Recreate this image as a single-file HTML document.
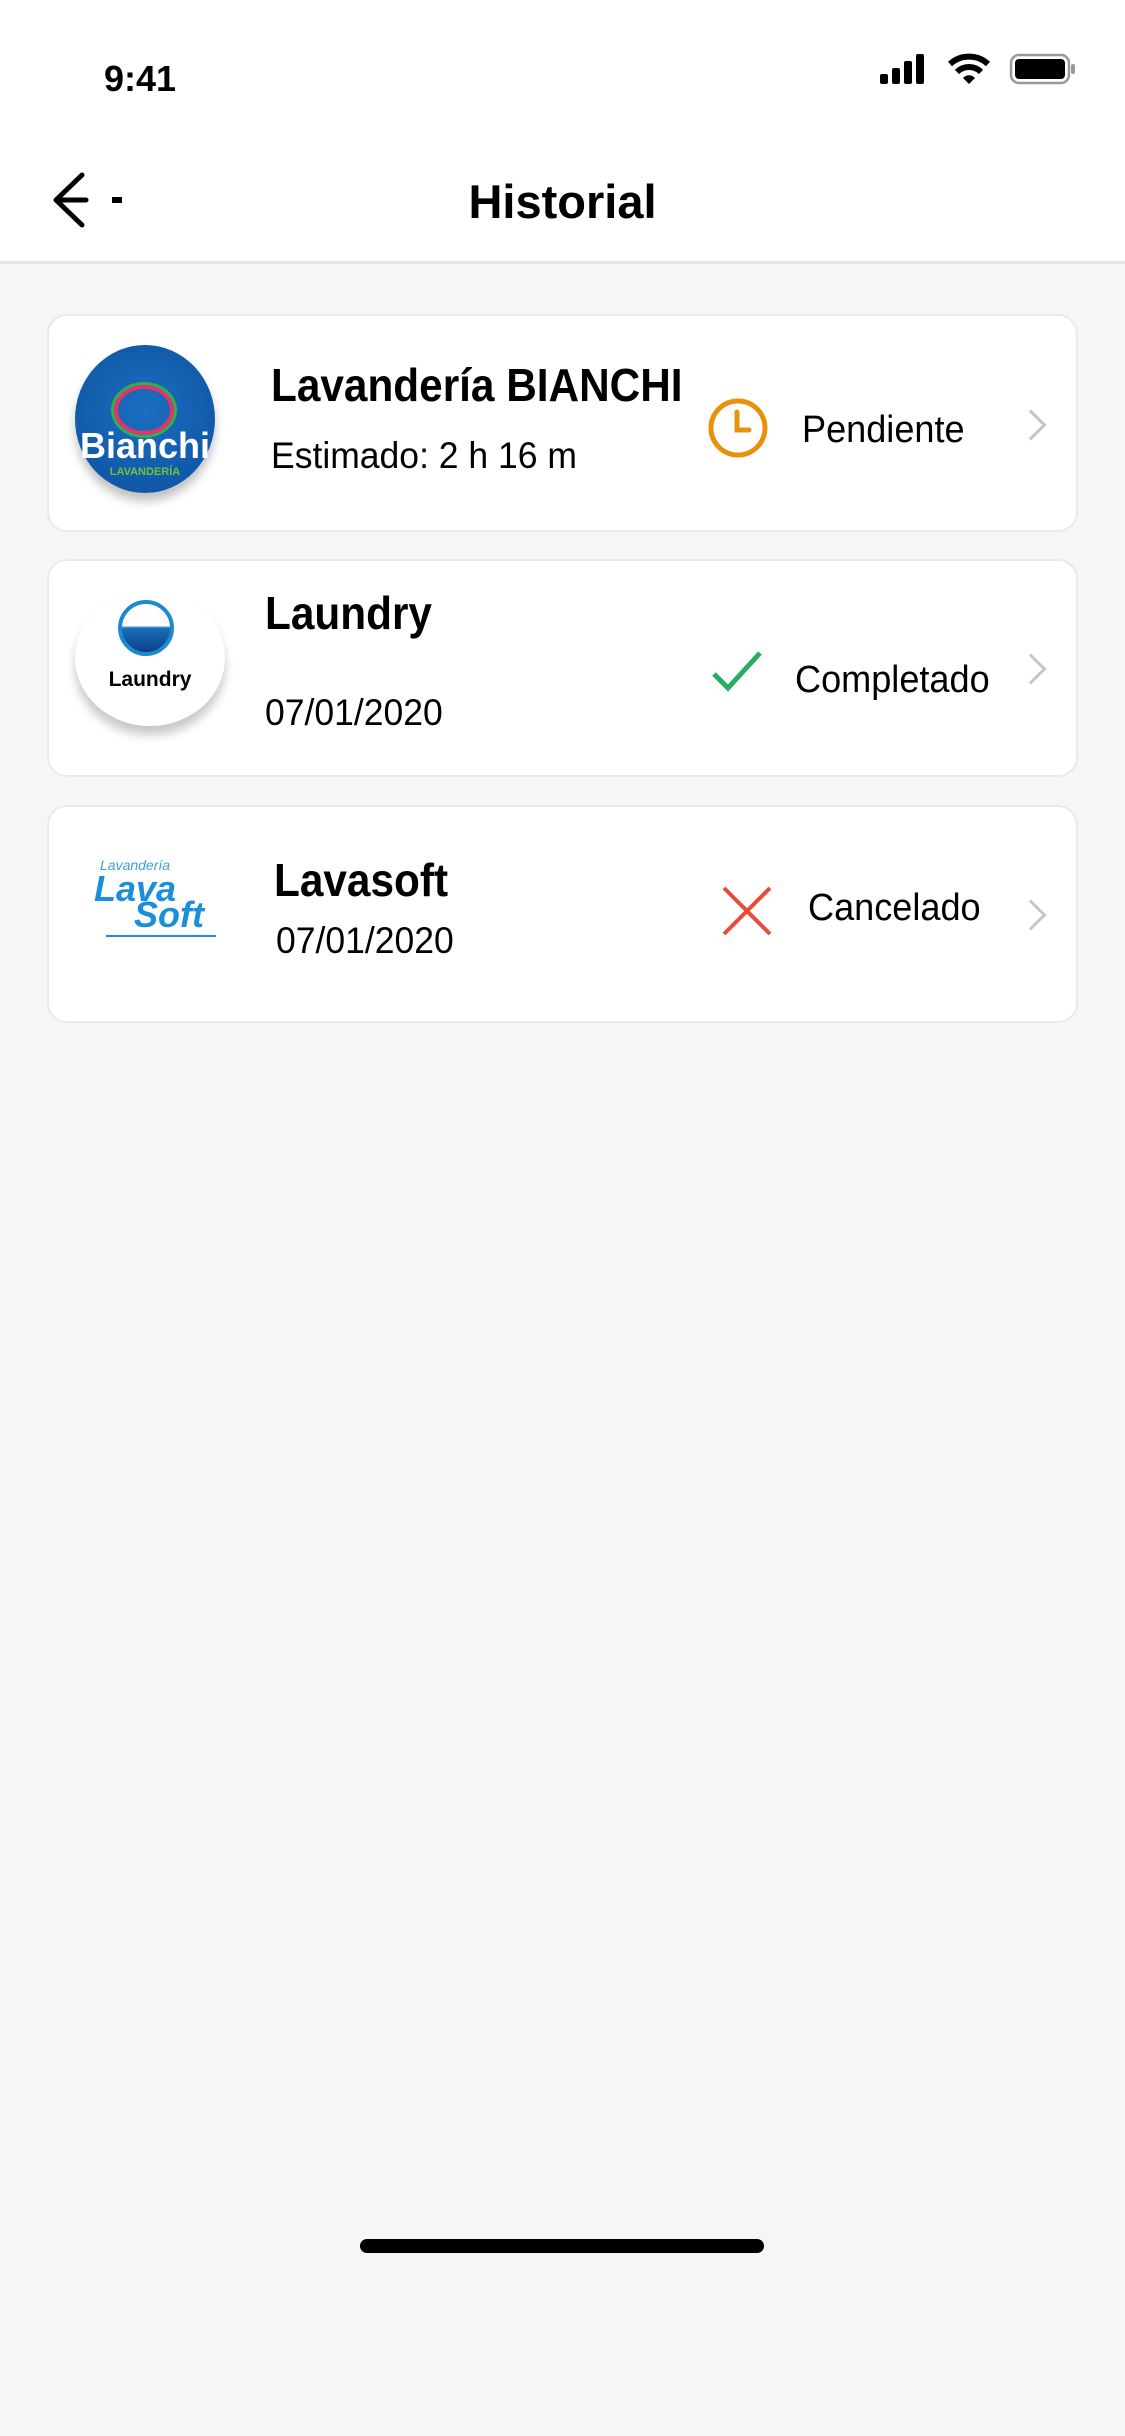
<!DOCTYPE html>
<html><head><meta charset="utf-8"><style>
*{margin:0;padding:0;box-sizing:border-box}
body{width:1125px;height:2436px;background:#f5f6f8;font-family:"Liberation Sans Narrow","Liberation Sans",sans-serif;color:#000;position:relative;overflow:hidden}
.hdr{position:absolute;left:0;top:0;width:1125px;height:264px;background:#fff;border-bottom:3px solid #e4e5e8}
.abs{position:absolute;white-space:nowrap}
.card{position:absolute;left:47px;width:1031px;height:218px;background:#fff;border:2px solid #e8eaee;border-radius:20px}
.t{font-size:46px;font-weight:bold;line-height:1;transform:scaleX(.92);transform-origin:left}
.s{font-size:37px;line-height:1;transform:scaleX(.96);transform-origin:left}
.st{font-size:38px;line-height:1;transform:scaleX(.95);transform-origin:left}
.chev{position:absolute;width:22px;height:22px;border-right:3px solid #c6c6c8;border-top:3px solid #c6c6c8;transform:rotate(45deg)}
</style></head><body>
<div class="hdr"></div>
<div class="abs" style="left:104px;top:58px;font-size:36px;font-weight:bold">9:41</div>
<svg class="abs" style="left:878px;top:52px" width="200" height="34">
<rect x="2" y="22" width="8" height="10" rx="2"/><rect x="14" y="16" width="8" height="16" rx="2"/><rect x="26" y="9" width="8" height="23" rx="2"/><rect x="38" y="2" width="8" height="30" rx="2"/>
<path d="M72 12a28 28 0 0 1 38 0" stroke="#000" stroke-width="6" fill="none"/><path d="M79 20a17 17 0 0 1 24 0" stroke="#000" stroke-width="6" fill="none"/><path d="M85 26l6 6 6-6a8 8 0 0 0-12 0z"/>
<rect x="133" y="3" width="58" height="28" rx="8" fill="none" stroke="#999" stroke-width="2.5"/><rect x="137" y="7" width="50" height="20" rx="4"/><rect x="193" y="12" width="4" height="10" rx="2" fill="#999"/>
</svg>
<svg class="abs" style="left:50px;top:170px" width="80" height="60"><path d="M32 5L6 30 32 55M6 30h30" stroke="#000" stroke-width="5" fill="none" stroke-linecap="round" stroke-linejoin="round"/><rect x="62" y="27" width="10" height="6"/></svg>
<div class="abs" style="left:0;width:1125px;top:174px;text-align:center;font-size:47px;font-weight:bold">Historial</div>

<div class="card" style="top:314px"></div>
<div class="abs" style="left:75px;top:345px;width:140px;height:148px;border-radius:50%;background:radial-gradient(circle at 50% 45%,#1a6fc0,#0e4f9e);box-shadow:0 8px 10px rgba(0,0,0,.25)"></div>
<div class="abs" style="left:114px;top:385px;width:60px;height:50px;border-radius:50%;border:4px solid #e0336f;box-shadow:0 0 0 3px #2fb24a"></div>
<div class="abs" style="left:78px;top:425px;width:134px;text-align:center;color:#fff;font-weight:bold;font-size:36px;font-family:'Liberation Sans',sans-serif">Bianchi</div>
<div class="abs" style="left:78px;top:466px;width:134px;text-align:center;color:#6fc23a;font-weight:bold;font-size:11px">LAVANDERÍA</div>
<div class="abs t" style="left:271px;top:362px">Lavandería BIANCHI</div>
<div class="abs s" style="left:271px;top:437px">Estimado: 2 h 16 m</div>
<svg class="abs" style="left:706px;top:396px" width="64" height="64"><circle cx="32" cy="32" r="27" fill="none" stroke="#e8920c" stroke-width="5"/><path d="M31 16v18h12" fill="none" stroke="#e8920c" stroke-width="5" stroke-linecap="round"/></svg>
<div class="abs st" style="left:802px;top:411px">Pendiente</div>
<div class="chev" style="left:1020px;top:414px"></div>

<div class="card" style="top:559px"></div>
<div class="abs" style="left:75px;top:590px;width:150px;height:136px;border-radius:50%;background:#fff;box-shadow:0 9px 10px rgba(0,0,0,.22)"></div>
<div class="abs" style="left:118px;top:600px;width:56px;height:56px;border-radius:50%;border:4px solid #1d8ad0;background:linear-gradient(#fff 45%,#1770b8 50%,#0d3e8a)"></div>
<div class="abs" style="left:75px;top:668px;width:150px;text-align:center;font-weight:bold;font-size:21px;font-family:'Liberation Sans',sans-serif">Laundry</div>
<div class="abs t" style="left:265px;top:590px">Laundry</div>
<div class="abs s" style="left:265px;top:694px">07/01/2020</div>
<svg class="abs" style="left:710px;top:648px" width="56" height="46"><path d="M4 26l14 14L50 5" fill="none" stroke="#27ae60" stroke-width="5"/></svg>
<div class="abs st" style="left:795px;top:661px">Completado</div>
<div class="chev" style="left:1020px;top:658px"></div>

<div class="card" style="top:805px"></div>
<div class="abs" style="left:100px;top:857px;font-size:14px;color:#3aa0e0;font-style:italic">Lavandería</div>
<div class="abs" style="left:94px;top:868px;font-size:36px;font-weight:bold;font-style:italic;color:#1c8fdb;font-family:'Liberation Sans',sans-serif">Lava</div>
<div class="abs" style="left:134px;top:894px;font-size:36px;font-weight:bold;font-style:italic;color:#1c8fdb;font-family:'Liberation Sans',sans-serif">Soft</div>
<div class="abs" style="left:106px;top:935px;width:110px;height:2px;background:#1c8fdb"></div>
<div class="abs t" style="left:274px;top:857px">Lavasoft</div>
<div class="abs s" style="left:276px;top:922px">07/01/2020</div>
<svg class="abs" style="left:720px;top:884px" width="54" height="54"><path d="M4 4l46 46M50 4L4 50" stroke="#e74c3c" stroke-width="4"/></svg>
<div class="abs st" style="left:808px;top:889px">Cancelado</div>
<div class="chev" style="left:1020px;top:904px"></div>

<div class="abs" style="left:360px;top:2239px;width:404px;height:14px;border-radius:7px;background:#000"></div>
</body></html>
